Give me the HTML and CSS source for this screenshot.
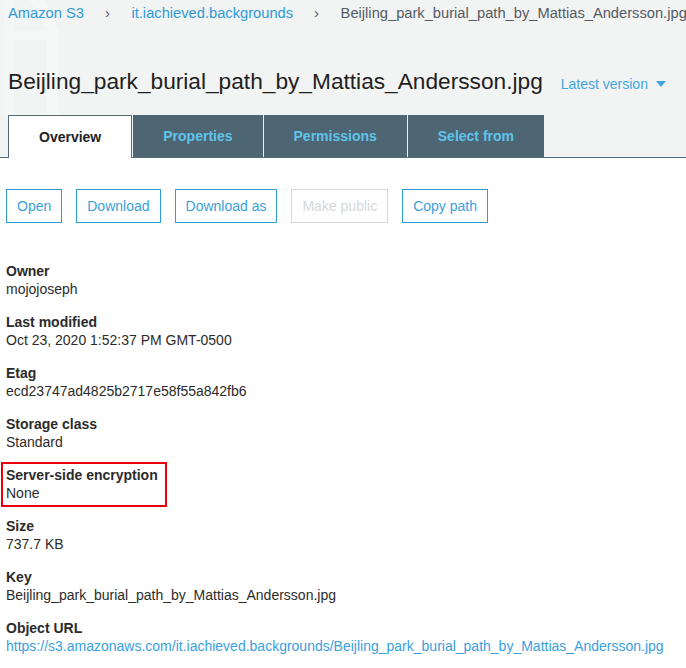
FILE: index.html
```html
<!DOCTYPE html>
<html>
<head>
<meta charset="utf-8">
<title>Beijling_park_burial_path_by_Mattias_Andersson.jpg</title>
<link rel="stylesheet" href="styles.css">
</head>
<body>
<header class="header">
  <svg class="watermark" width="80" height="115" viewBox="0 0 80 115" aria-hidden="true">
    <path d="M -40 -12 L 30 -12 L 53 30 L 53 140" fill="none" stroke="#f6f7f7" stroke-width="12"/>
    <path d="M 14 -5 L 14 30 L 47 30 L 47 40 L 14 40 L 14 120 L 4 120 L 4 -5 Z" fill="#f5f6f6"/>
  </svg>
  <nav class="crumbs">
    <a class="crumb-link" href="#">Amazon S3</a>
    <span class="chev">›</span>
    <a class="crumb-link" href="#">it.iachieved.backgrounds</a>
    <span class="chev">›</span>
    <span class="crumb-current">Beijling_park_burial_path_by_Mattias_Andersson.jpg</span>
  </nav>
  <div class="title-row">
    <h1 class="title">Beijling_park_burial_path_by_Mattias_Andersson.jpg</h1>
    <span class="version">Latest version <span class="caret"></span></span>
  </div>
  <div class="tabs">
    <div class="tab active">Overview</div>
    <div class="tab">Properties</div>
    <div class="tab">Permissions</div>
    <div class="tab">Select from</div>
  </div>
</header>
<main class="content">
  <div class="actions">
    <button class="btn">Open</button>
    <button class="btn">Download</button>
    <button class="btn">Download as</button>
    <button class="btn disabled">Make public</button>
    <button class="btn">Copy path</button>
  </div>
  <dl class="details">
    <div class="row"><dt>Owner</dt><dd>mojojoseph</dd></div>
    <div class="row"><dt>Last modified</dt><dd>Oct 23, 2020 1:52:37 PM GMT-0500</dd></div>
    <div class="row"><dt>Etag</dt><dd>ecd23747ad4825b2717e58f55a842fb6</dd></div>
    <div class="row"><dt>Storage class</dt><dd>Standard</dd></div>
    <div class="row highlight"><dt>Server-side encryption</dt><dd>None</dd><span class="mark"></span></div>
    <div class="row"><dt>Size</dt><dd>737.7 KB</dd></div>
    <div class="row"><dt>Key</dt><dd>Beijling_park_burial_path_by_Mattias_Andersson.jpg</dd></div>
    <div class="row"><dt>Object URL</dt><dd><a class="url" href="#">https://s3.amazonaws.com/it.iachieved.backgrounds/Beijling_park_burial_path_by_Mattias_Andersson.jpg</a></dd></div>
  </dl>
</main>
</body>
</html>
```

FILE: styles.css
```css
html, body {
  margin: 0;
  padding: 0;
  background: #ffffff;
  font-family: "Liberation Sans", Arial, sans-serif;
  color: #2b2b2b;
  overflow: hidden;
}

.header {
  position: relative;
  background: #f2f3f3;
  padding-left: 8px;
  border-bottom: 1px solid #546b7b;
  white-space: nowrap;
}

.watermark {
  position: absolute;
  left: 0;
  top: 0;
  pointer-events: none;
}

.crumbs {
  position: relative;
  padding-top: 4px;
  height: 18px;
  line-height: 18px;
  font-size: 14.7px;
  display: flex;
  align-items: center;
}

.crumb-link {
  color: #2f9bd8;
  text-decoration: none;
}

.chev {
  color: #545b64;
  padding: 0 21.5px 0 21px;
  font-size: 15px;
}

.crumb-current {
  color: #545b64;
}

.title-row {
  position: relative;
  display: flex;
  align-items: center;
  margin-top: 44px;
  height: 30px;
}

.title {
  margin: 0;
  font-size: 22.7px;
  font-weight: normal;
  line-height: 30px;
  color: #1f1f1f;
}

.version {
  margin-left: 18px;
  margin-top: 6px;
  font-size: 14px;
  color: #3fa6df;
  display: flex;
  align-items: center;
}

.caret {
  display: inline-block;
  width: 0;
  height: 0;
  margin-left: 8px;
  border-left: 5px solid transparent;
  border-right: 5px solid transparent;
  border-top: 6px solid #3fa6df;
}

.tabs {
  position: relative;
  display: flex;
  align-items: flex-start;
  gap: 1px;
  margin-top: 19px;
}

.tab {
  box-sizing: border-box;
  height: 42px;
  line-height: 42px;
  padding: 0 30px;
  background: #4e6574;
  color: #5ec4ea;
  font-size: 14px;
  font-weight: bold;
}

.tab.active {
  height: 43px;
  margin-bottom: -1px;
  padding: 0 30px;
  background: #ffffff;
  color: #222222;
  border: 1px solid #546b7b;
  border-bottom: none;
  line-height: 42px;
}

.content {
  padding: 0 6px;
}

.actions {
  display: flex;
  gap: 14px;
  margin-top: 31px;
}

.btn {
  box-sizing: border-box;
  height: 34px;
  padding: 0 10px;
  background: #ffffff;
  border: 1px solid #2f9bd8;
  color: #3a9fdc;
  font-family: "Liberation Sans", Arial, sans-serif;
  font-size: 14px;
  border-radius: 0;
}

.btn.disabled {
  border-color: #d5d8d8;
  color: #d5d8d8;
}

.details {
  margin: 39px 0 0 0;
}

.row {
  position: relative;
  margin-bottom: 15px;
  font-size: 14px;
  line-height: 18px;
}

.row dt {
  font-weight: bold;
  color: #2b2b2b;
}

.row dd {
  margin: 0;
  color: #2b2b2b;
  white-space: nowrap;
}

.url {
  color: #3aa0de;
  text-decoration: none;
}

.mark {
  position: absolute;
  left: -5px;
  top: -4px;
  width: 162px;
  height: 41px;
  border: 2px solid #e8000b;
  pointer-events: none;
}
```
